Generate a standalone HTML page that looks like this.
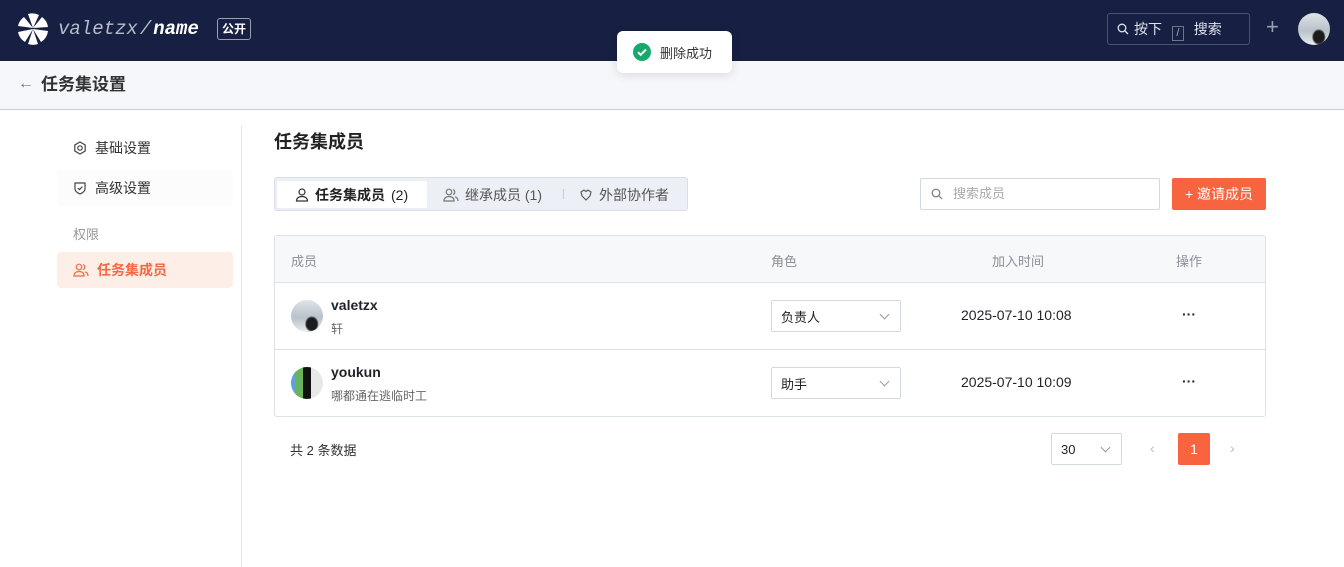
<!DOCTYPE html>
<html><head><meta charset="utf-8"><style>
*{box-sizing:border-box;margin:0;padding:0}
body{width:1344px;height:567px;overflow:hidden;font-family:"Liberation Sans","Noto Sans CJK SC",sans-serif;background:#fff;color:#1f2329;position:relative;font-size:14px}
.abs{position:absolute}
.hdr{left:0;top:0;width:1344px;height:61px;background:#172042}
.sub{left:0;top:61px;width:1344px;height:49px;background:#f6f7fb;border-bottom:1px solid #c9ccd4}
.side{left:241px;top:126px;width:1px;height:441px;background:#e3e5ea}
.mi{left:57px;width:176px;height:36px;display:flex;align-items:center;padding-left:16px;font-size:14px;color:#333;gap:8px;border-radius:4px}
.tabs{left:274px;top:177px;width:414px;height:34px;background:#eceff5;border:1px solid #d9dde6;border-radius:3px}
.tab{top:3px;height:27px;display:flex;align-items:center;gap:6px;font-size:14px;color:#555}
.tbl{left:274px;top:235px;width:992px;height:182px;border:1px solid #dde1e8;border-radius:3px;overflow:hidden}
.th{left:0;top:0;width:990px;height:47px;background:#f7f8fa;border-bottom:1px solid #dde1e8;color:#8a8f99;font-size:13px}
.row{left:0;width:990px;height:67px}
.sel{width:130px;height:32px;border:1px solid #d4d8e0;border-radius:2px;display:flex;align-items:center;padding-left:9px;font-size:13px;color:#222}
.chev{position:absolute;right:12px;top:10px;width:7px;height:7px;border-right:1.3px solid #999;border-bottom:1.3px solid #999;transform:rotate(45deg)}
.av1{background:radial-gradient(ellipse at 65% 75%,#1c1c1c 0 18%,transparent 24%),linear-gradient(180deg,#dfe4e8,#b9c2ca 55%,#e9ecee)}
</style></head><body>
<div class="abs hdr">
  <svg class="abs" style="left:17px;top:13px" width="32" height="32" viewBox="0 0 32 32"><g fill="#fff"><path d="M16 15 L11 1 A15 15 0 0 1 22 2 Z"/><path d="M16 15 L25 4 A15 15 0 0 1 31 14 Z"/><path d="M16 16 L31 18 A15 15 0 0 1 24 29 Z"/><path d="M16 16 L21 31 A15 15 0 0 1 11 31 Z"/><path d="M16 16 L8 29 A15 15 0 0 1 1 19 Z"/><path d="M16 15 L1 13 A15 15 0 0 1 7 4 Z"/></g></svg>
  <div class="abs" style="left:58px;top:18px;font-family:'Liberation Mono',monospace;font-style:italic;font-size:19px;color:#b8bdc9;letter-spacing:0">valetzx<span style="margin:0 2px">/</span><b style="color:#fff">name</b></div>
  <div class="abs" style="left:217px;top:18px;width:34px;height:22px;border:1px solid #9aa0b0;border-radius:3px;color:#fff;font-size:12px;text-align:center;line-height:20px;font-weight:bold">公开</div>
  <div class="abs" style="left:1107px;top:13px;width:143px;height:32px;border:1px solid #4a5272;border-radius:3px;color:#dfe3ee;font-size:14px;line-height:30px;padding-left:26px">按下 <span style="display:inline-block;width:12px;height:15px;border:1px solid #6d7592;font-size:11px;line-height:13px;text-align:center;margin:0 6px;color:#aaa;vertical-align:-2px">/</span> 搜索
    <svg class="abs" style="left:9px;top:9px" width="12" height="12" viewBox="0 0 12 12"><circle cx="5" cy="5" r="3.8" stroke="#dfe3ee" stroke-width="1.3" fill="none"/><path d="M8 8L11 11" stroke="#dfe3ee" stroke-width="1.3"/></svg></div>
  <div class="abs" style="left:1266px;top:14px;color:#9aa0b0;font-size:22px;font-weight:300">+</div>
  <div class="abs av1" style="left:1298px;top:13px;width:32px;height:32px;border-radius:50%"></div>
</div>
<div class="abs sub">
  <div class="abs" style="left:18px;top:14px;color:#777;font-size:16px">←</div>
  <div class="abs" style="left:41px;top:13px;font-size:17px;font-weight:bold;color:#333;line-height:22px">任务集设置</div>
</div>
<div class="abs" style="left:617px;top:31px;width:115px;height:42px;background:#fff;border-radius:6px;box-shadow:0 2px 10px rgba(0,0,0,.12);display:flex;align-items:center;padding-left:16px;gap:9px;font-size:13px;color:#333">
  <svg width="18" height="18" viewBox="0 0 18 18"><circle cx="9" cy="9" r="9" fill="#17a86b"/><path d="M5 9.2l2.7 2.6L13 6.5" stroke="#fff" stroke-width="2" fill="none"/></svg>删除成功</div>
<div class="abs side"></div>
<div class="abs mi" style="top:130px"><svg width="14" height="14" viewBox="0 0 14 14"><path d="M7 1l5.2 3v6L7 13 1.8 10V4z" fill="none" stroke="#444" stroke-width="1.2"/><circle cx="7" cy="7" r="2.2" fill="none" stroke="#444" stroke-width="1.2"/></svg>基础设置</div>
<div class="abs mi" style="top:170px;background:#fcfcfd"><svg width="14" height="14" viewBox="0 0 14 14"><path d="M2 2h10v6c0 3-5 5-5 5s-5-2-5-5z" fill="none" stroke="#444" stroke-width="1.2"/><path d="M4.8 7l1.7 1.6L9.3 5.6" fill="none" stroke="#444" stroke-width="1.2"/></svg>高级设置</div>
<div class="abs" style="left:73px;top:224px;color:#999;font-size:13px">权限</div>
<div class="abs mi" style="top:252px;background:#fdeee8;color:#f26a44;font-weight:bold"><svg width="16" height="14" viewBox="0 0 16 14"><circle cx="6" cy="4" r="2.8" fill="none" stroke="#f26a44" stroke-width="1.2"/><path d="M1 13c0-3 2-4.5 5-4.5s5 1.5 5 4.5z" fill="none" stroke="#f26a44" stroke-width="1.2"/><path d="M10 1.5a2.8 2.8 0 010 5.2M12 8.8c2 .6 3 2 3 4.2" fill="none" stroke="#f26a44" stroke-width="1.2"/></svg>任务集成员</div>
<div class="abs" style="left:274px;top:128px;font-size:18px;font-weight:bold;color:#222">任务集成员</div>
<div class="abs tabs">
  <div class="abs tab" style="left:2px;width:150px;background:#fff;border-radius:2px;padding-left:18px;color:#222;font-weight:bold"><svg width="14" height="14" viewBox="0 0 14 14"><circle cx="7" cy="4" r="3" fill="none" stroke="#333" stroke-width="1.2"/><path d="M1.5 13c0-3 2.5-4.5 5.5-4.5s5.5 1.5 5.5 4.5z" fill="none" stroke="#333" stroke-width="1.2"/></svg>任务集成员 <span style="font-weight:normal">(2)</span></div>
  <div class="abs tab" style="left:168px"><svg width="16" height="14" viewBox="0 0 16 14"><circle cx="6" cy="4" r="2.8" fill="none" stroke="#777" stroke-width="1.2"/><path d="M1 13c0-3 2-4.5 5-4.5s5 1.5 5 4.5z" fill="none" stroke="#777" stroke-width="1.2"/><path d="M10 1.5a2.8 2.8 0 010 5.2M12 8.8c2 .6 3 2 3 4.2" fill="none" stroke="#777" stroke-width="1.2"/></svg>继承成员 (1)</div>
  <div class="abs" style="left:288px;top:11px;width:1px;height:10px;background:#ccc"></div>
  <div class="abs tab" style="left:304px"><svg width="14" height="14" viewBox="0 0 14 14"><path d="M2 4l3-2 2 1.5L9 2l3 2-1 4-4 4-4-4z" fill="none" stroke="#555" stroke-width="1.1"/></svg>外部协作者</div>
</div>
<div class="abs" style="left:920px;top:178px;width:240px;height:32px;border:1px solid #d4d8e0;border-radius:2px;color:#aaa;font-size:13px;line-height:30px;padding-left:32px">搜索成员
  <svg class="abs" style="left:10px;top:9px" width="12" height="12" viewBox="0 0 12 12"><circle cx="5" cy="5" r="3.8" stroke="#777" stroke-width="1.2" fill="none"/><path d="M8 8L11 11" stroke="#777" stroke-width="1.2"/></svg></div>
<div class="abs" style="left:1172px;top:178px;width:94px;height:32px;background:#f7643f;border-radius:2px;color:#fff;font-size:14px;line-height:32px;text-align:center">+ 邀请成员</div>
<div class="abs tbl">
  <div class="abs th"><span class="abs" style="left:16px;top:15px">成员</span><span class="abs" style="left:496px;top:15px">角色</span><span class="abs" style="left:717px;top:15px">加入时间</span><span class="abs" style="left:901px;top:15px">操作</span></div>
  <div class="abs row" style="top:47px;border-bottom:1px solid #dde1e8">
    <div class="abs av1" style="left:16px;top:17px;width:32px;height:32px;border-radius:50%"></div>
    <div class="abs" style="left:56px;top:14px;font-weight:bold;font-size:14px">valetzx</div>
    <div class="abs" style="left:56px;top:37px;font-size:12px;color:#666">轩</div>
    <div class="abs sel" style="left:496px;top:17px">负责人<i class="chev"></i></div>
    <div class="abs" style="left:686px;top:24px;font-size:14px">2025-07-10 10:08</div>
    <div class="abs" style="left:907px;top:23px;font-size:14px;font-weight:bold">···</div>
  </div>
  <div class="abs row" style="top:114px">
    <div class="abs" style="left:16px;top:17px;width:32px;height:32px;border-radius:50%;background:linear-gradient(90deg,#5aa2d8 0 15%,#6bb35a 15% 38%,#111 38% 62%,#e8e8e8 62%)"></div>
    <div class="abs" style="left:56px;top:14px;font-weight:bold;font-size:14px">youkun</div>
    <div class="abs" style="left:56px;top:37px;font-size:12px;color:#666">哪都通在逃临时工</div>
    <div class="abs sel" style="left:496px;top:17px">助手<i class="chev"></i></div>
    <div class="abs" style="left:686px;top:24px;font-size:14px">2025-07-10 10:09</div>
    <div class="abs" style="left:907px;top:23px;font-size:14px;font-weight:bold">···</div>
  </div>
</div>
<div class="abs" style="left:290px;top:440px;font-size:13px;color:#333">共 2 条数据</div>
<div class="abs sel" style="left:1051px;top:433px;width:71px;height:32px">30<i class="chev"></i></div>
<div class="abs" style="left:1150px;top:440px;color:#bbb;font-size:14px">‹</div>
<div class="abs" style="left:1178px;top:433px;width:32px;height:32px;background:#f7643f;color:#fff;border-radius:2px;text-align:center;line-height:32px;font-size:14px">1</div>
<div class="abs" style="left:1230px;top:440px;color:#bbb;font-size:14px">›</div>
</body></html>
